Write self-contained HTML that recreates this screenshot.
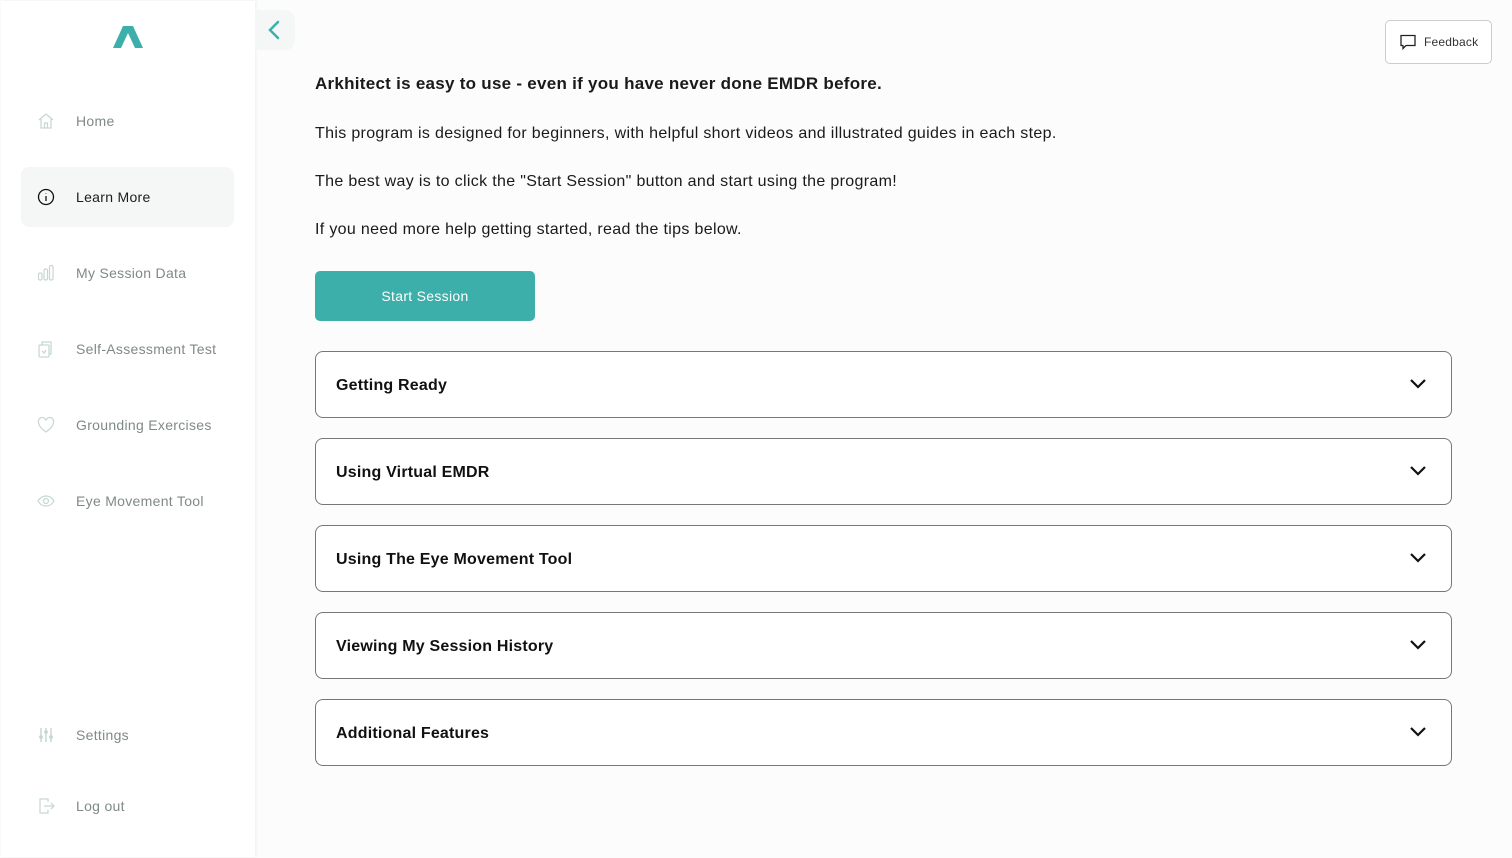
<!DOCTYPE html>
<html><head><style>
*{box-sizing:border-box;margin:0;padding:0}
body{width:1512px;height:858px;background:#fcfcfc;font-family:"Liberation Sans",sans-serif;position:relative;overflow:hidden;color:#111}
.side{position:absolute;left:1px;top:1px;width:254px;height:856px;background:#fff;box-shadow:1px 0 3px rgba(0,0,0,.06)}
.item{position:absolute;left:21px;width:213px;height:60px;border-radius:8px;display:flex;align-items:center;font-size:14px;color:#7f8a87;letter-spacing:0.3px}
.item svg{position:absolute;left:16px}
.item span{position:absolute;left:55px;top:22px}
.item.act{background:#f5f7f6;color:#1c1c1c}
.back{position:absolute;left:255px;top:10px;width:40px;height:40px;background:#f5f7f6;border-radius:0 10px 10px 0}
.fb{position:absolute;left:1385px;top:20px;width:107px;height:44px;border:1px solid #ccc;border-radius:5px;background:#fff;font-size:12px;color:#333;letter-spacing:0.2px}
.p{position:absolute;left:315px;font-size:16px;color:#1a1a1a;letter-spacing:0.33px}
.btn{position:absolute;left:315px;top:271px;width:220px;height:50px;background:#3cafaa;border-radius:5px;color:#fff;font-size:14px;text-align:center;line-height:50px;letter-spacing:0.3px}
.acc{position:absolute;left:315px;width:1137px;height:67px;border:1px solid #777;border-radius:8px;background:#fff;font-size:16px;font-weight:bold;padding-left:20px;line-height:67px;letter-spacing:0.2px}
.acc svg{position:absolute;right:24px;top:26px}
</style></head><body>
<div class="side">
<svg style="position:absolute;left:112px;top:25px" width="30" height="22" viewBox="0 0 30 22"><path d="M10 0H20L30 22H22L15 7L8 22H0Z" fill="#3cafaa"/></svg>
</div>
<div class="item" style="top:91px"><svg width="18" height="18" viewBox="0 0 18 18" fill="none" stroke="#c6d6d2" stroke-width="1.2"><path d="M2 8L9 2L16 8M4 7V16H14V7M7.5 16V11H10.5V16"/></svg><span>Home</span></div>
<div class="item act" style="top:167px"><svg width="18" height="18" viewBox="0 0 18 18" fill="none" stroke="#111" stroke-width="1.3"><circle cx="9" cy="9" r="7.5"/><path d="M9 8V13M9 5.5V6"/></svg><span>Learn More</span></div>
<div class="item" style="top:243px"><svg width="18" height="18" viewBox="0 0 18 18" fill="none" stroke="#c6d6d2" stroke-width="1.2"><rect x="1.5" y="9" width="3.5" height="7" rx="1.5"/><rect x="7" y="5" width="3.5" height="11" rx="1.5"/><rect x="12.5" y="1.5" width="3.5" height="14.5" rx="1.5"/></svg><span>My Session Data</span></div>
<div class="item" style="top:319px"><svg width="18" height="18" viewBox="0 0 18 18" fill="none" stroke="#c6d6d2" stroke-width="1.2"><rect x="2" y="5" width="10" height="12" rx="1"/><path d="M5 5V2H14V14H12M5 11L7 13L9 10"/></svg><span>Self-Assessment Test</span></div>
<div class="item" style="top:395px"><svg width="18" height="18" viewBox="0 0 18 18" fill="none" stroke="#c6d6d2" stroke-width="1.2"><path d="M9 16C5 13 1.5 10 1.5 6A3.8 3.8 0 0 1 9 4.5A3.8 3.8 0 0 1 16.5 6C16.5 10 13 13 9 16Z"/></svg><span>Grounding Exercises</span></div>
<div class="item" style="top:471px"><svg width="18" height="18" viewBox="0 0 18 18" fill="none" stroke="#c6d6d2" stroke-width="1.2"><path d="M1 9C3 5.5 6 4 9 4S15 5.5 17 9C15 12.5 12 14 9 14S3 12.5 1 9Z"/><circle cx="9" cy="9" r="2.5"/></svg><span>Eye Movement Tool</span></div>
<div class="item" style="top:705px"><svg width="18" height="18" viewBox="0 0 18 18" fill="none" stroke="#c6d6d2" stroke-width="1.4"><path d="M4 2V16M9 2V16M14 2V16"/><circle cx="4" cy="11" r="1.2" fill="#c6d6d2"/><circle cx="9" cy="6" r="1.2" fill="#c6d6d2"/><circle cx="14" cy="11" r="1.2" fill="#c6d6d2"/></svg><span>Settings</span></div>
<div class="item" style="top:776px"><svg width="18" height="18" viewBox="0 0 18 18" fill="none" stroke="#c6d6d2" stroke-width="1.2"><path d="M11 5V2H3V16H11V13M7 9H17M14 6L17 9L14 12"/></svg><span>Log out</span></div>
<div class="back"><svg style="position:absolute;left:12px;top:10px" width="14" height="20" viewBox="0 0 14 20" fill="none" stroke="#3cafaa" stroke-width="2.5" stroke-linecap="round"><path d="M11 2L3 10L11 18"/></svg></div>
<div class="fb"><svg style="position:absolute;left:13px;top:13px" width="18" height="17" viewBox="0 0 18 17" fill="none" stroke="#222" stroke-width="1.3"><path d="M2 1.5H16V11.5H7L4 14.5V11.5H2Z"/></svg><span style="position:absolute;left:38px;top:14px">Feedback</span></div>
<div class="p" style="top:74px;font-size:17px;font-weight:bold;letter-spacing:0.27px">Arkhitect is easy to use - even if you have never done EMDR before.</div>
<div class="p" style="top:125px">This program is designed for beginners, with helpful short videos and illustrated guides in each step.</div>
<div class="p" style="top:173px">The best way is to click the "Start Session" button and start using the program!</div>
<div class="p" style="top:221px">If you need more help getting started, read the tips below.</div>
<div class="btn">Start Session</div>
<div class="acc" style="top:351px">Getting Ready<svg width="18" height="12" viewBox="0 0 18 12" fill="none" stroke="#111" stroke-width="2.2"><path d="M2 2L9 9L16 2"/></svg></div>
<div class="acc" style="top:438px">Using Virtual EMDR<svg width="18" height="12" viewBox="0 0 18 12" fill="none" stroke="#111" stroke-width="2.2"><path d="M2 2L9 9L16 2"/></svg></div>
<div class="acc" style="top:525px">Using The Eye Movement Tool<svg width="18" height="12" viewBox="0 0 18 12" fill="none" stroke="#111" stroke-width="2.2"><path d="M2 2L9 9L16 2"/></svg></div>
<div class="acc" style="top:612px">Viewing My Session History<svg width="18" height="12" viewBox="0 0 18 12" fill="none" stroke="#111" stroke-width="2.2"><path d="M2 2L9 9L16 2"/></svg></div>
<div class="acc" style="top:699px">Additional Features<svg width="18" height="12" viewBox="0 0 18 12" fill="none" stroke="#111" stroke-width="2.2"><path d="M2 2L9 9L16 2"/></svg></div>
</body></html>
